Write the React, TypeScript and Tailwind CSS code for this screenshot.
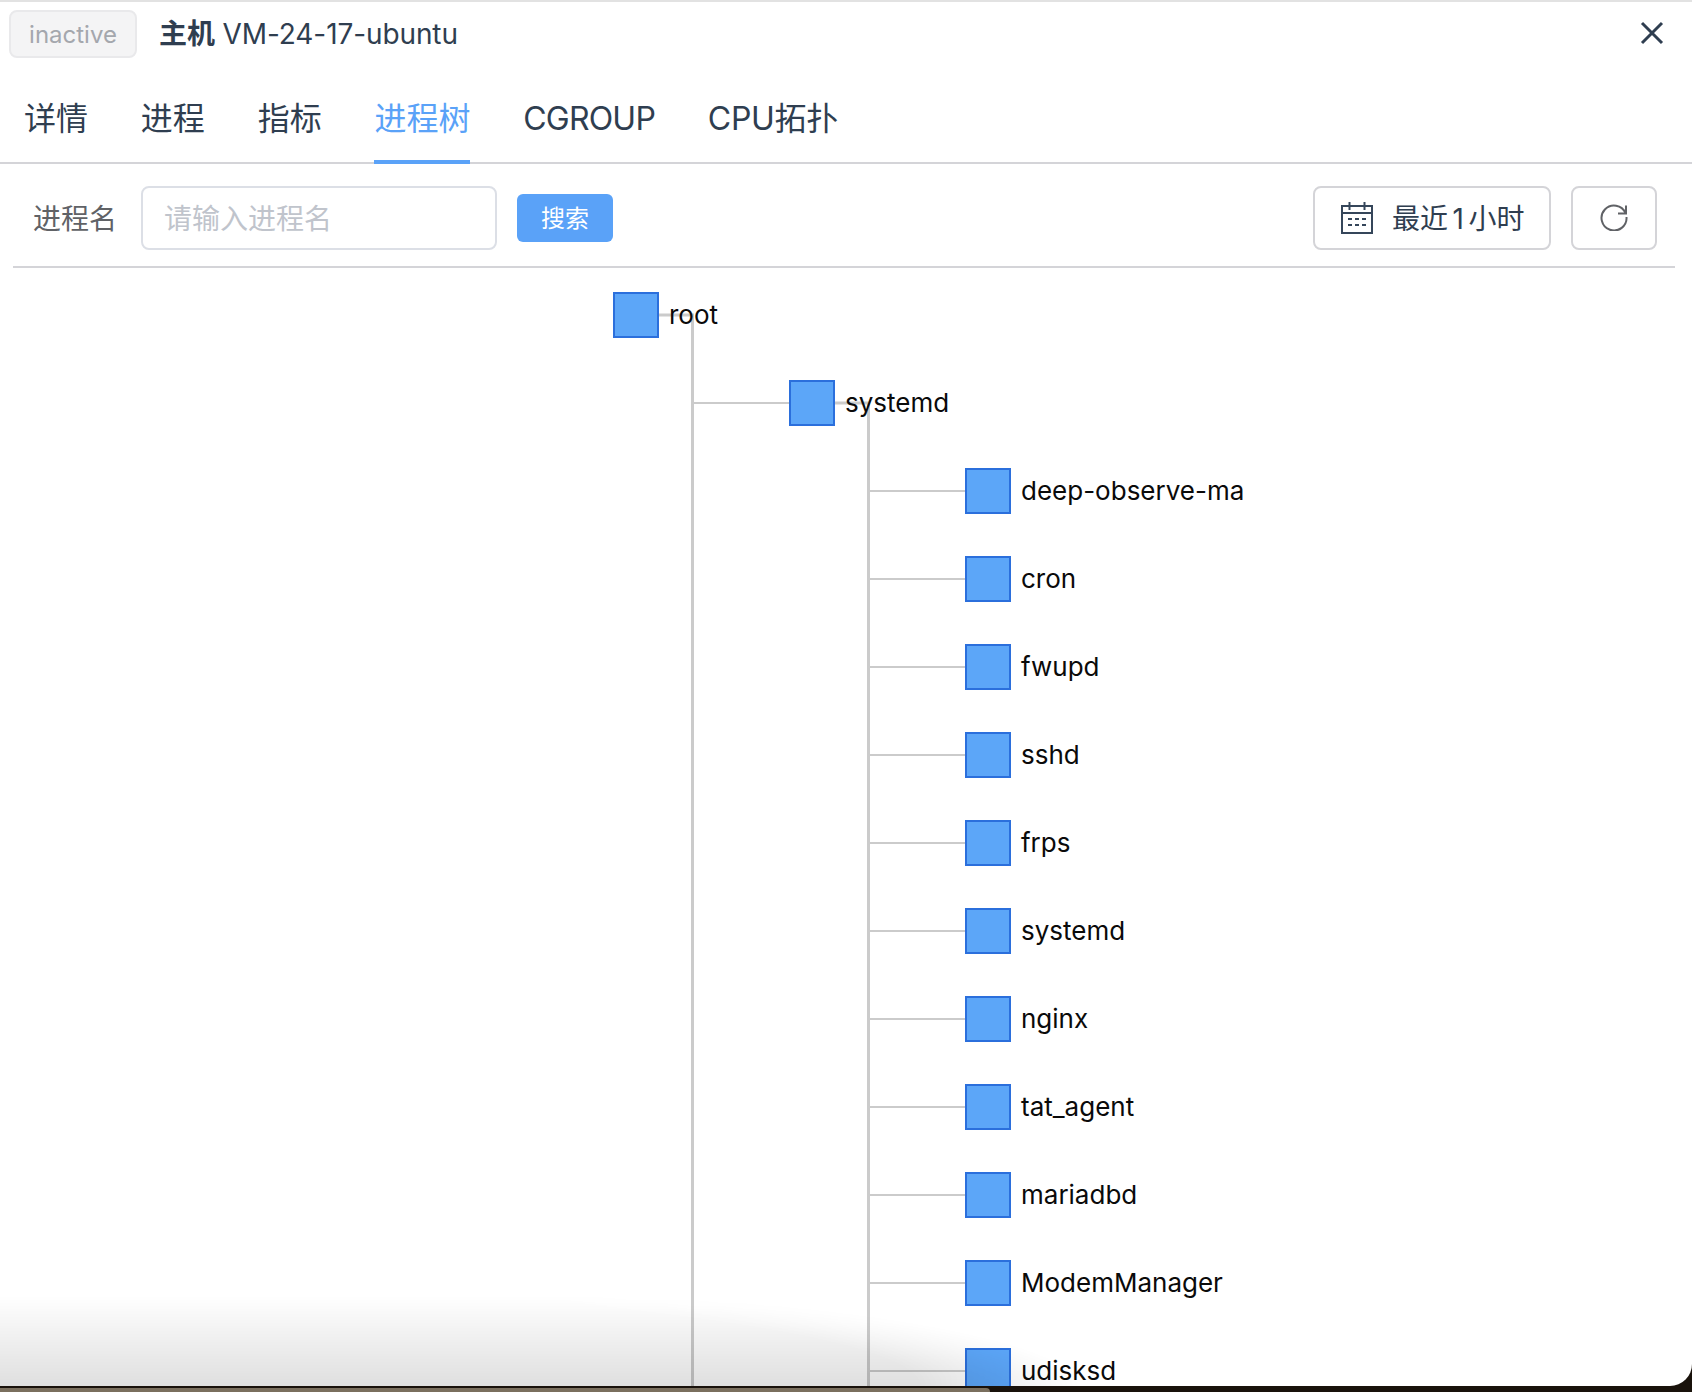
const FONT = "font-['Inter','Noto_Sans_CJK_SC',sans-serif]";

const children = ['deep-observe-ma','cron','fwupd','sshd','frps','systemd','nginx','tat_agent','mariadbd','ModemManager','udisksd'];

const tabs = [
  { label: '详情', cls: 'border-transparent text-[#2f3e50]' },
  { label: '进程', cls: 'border-transparent text-[#2f3e50]' },
  { label: '指标', cls: 'border-transparent text-[#2f3e50]' },
  { label: '进程树', cls: 'border-[#5aa2f8] text-[#5aa2f8]' },
  { label: 'CGROUP', cls: 'border-transparent text-[#2f3e50] tracking-[-0.8px]' },
  { label: 'CPU拓扑', cls: 'border-transparent text-[#2f3e50] tracking-[-0.3px]' },
];

function Node({ label, left }: { label: string; left: string }) {
  return (
    <div className={`flex h-[46px] shrink-0 items-center ${left}`}>
      <div className="h-[46px] w-[46px] shrink-0 border-2 border-[#2b6fdc] bg-[#5ca6f8]" />
      <span className="ml-[10px] mt-[0.5px] text-[26px] leading-[30px] text-[#0a0a0a]">{label}</span>
    </div>
  );
}

function TreeLines() {
  return (
    <svg className="absolute left-0 top-0" width="1692" height="1120" fill="none" stroke="#cbcbcb">
      <path d="M659 47H692.5V1120" strokeWidth="3" />
      <path d="M694 135H789" strokeWidth="2" />
      <path d="M835 135H868.5V1120" strokeWidth="3" />
      {children.map((c, i) => (
        <path key={c} d={`M870 ${223 + 88 * i}H965`} strokeWidth="2" />
      ))}
    </svg>
  );
}

function CalendarIcon() {
  return (
    <svg width="32" height="32" viewBox="0 0 32 32" fill="none" stroke="#35465a" strokeWidth="2" className="shrink-0">
      <rect x="1" y="4" width="30" height="27" />
      <path d="M1 11H31M8.5 0V8M23.5 0V8" />
      <path d="M7 17H11M14 17H18M21 17H25M7 23H11M14 23H18M21 23H25" />
    </svg>
  );
}

function RefreshIcon() {
  return (
    <svg width="28" height="28" viewBox="0 0 28 28" fill="none" stroke="#606266" strokeWidth="2" className="-mt-[2px] shrink-0">
      <path d="M25.5 10A12.5 12.5 0 1 0 26.5 14" />
      <path d="M26 2.5V10.5H18" />
    </svg>
  );
}

export default function App() {
  return (
    <div className={`${FONT} flex h-[1392px] w-[1692px] flex-col overflow-hidden bg-[#19120b]`}>
      <div className="relative flex h-[1386px] shrink-0 flex-col overflow-hidden rounded-br-[22px] border-t-2 border-[#e2e2e2] bg-white">
        <div className="flex h-[60px] shrink-0 items-start pl-[9px] pr-[28px] pt-[8px]">
          <div className="flex h-[48px] w-[128px] items-center justify-center rounded-[8px] border-2 border-[#e9e9eb] bg-[#f4f4f5] pt-[2px] text-[24px] text-[#a4a7ad]">inactive</div>
          <div className="ml-[22px] mt-[1px] text-[28px] leading-[46px] tracking-[-0.1px] text-[#2f3e50]">
            <span className="font-semibold">主机</span> VM-24-17-ubuntu
          </div>
          <svg className="ml-auto mt-[11px]" width="24" height="24" viewBox="0 0 24 24" fill="none" stroke="#2f3e50" strokeWidth="3">
            <path d="M2 2L22 22M22 2L2 22" />
          </svg>
        </div>
        <div className="flex h-[102px] shrink-0 border-b-2 border-[#d4d4d8] pl-[24px]">
          <div className="flex gap-[52.8px]">
            {tabs.map((t) => (
              <div key={t.label} className={`-mb-[2px] flex h-[102px] items-start border-b-4 pt-[28.5px] text-[32px] leading-[56px] ${t.cls}`}>{t.label}</div>
            ))}
          </div>
        </div>
        <div className="ml-[13px] mr-[17px] flex h-[104px] shrink-0 items-center border-b-2 border-[#d4d4d8] pl-[20px] pt-[6px]">
          <span className="mt-[2px] text-[28px] text-[#606266]">进程名</span>
          <div className="ml-[24px] flex h-[64px] w-[356px] items-center rounded-[8px] border-2 border-[#dcdfe6] pl-[21px] pt-[2px] text-[28px] text-[#c0c4cc]">请输入进程名</div>
          <div className="ml-[20px] flex h-[48px] w-[96px] items-center justify-center rounded-[6px] bg-[#5aa2f8] pt-[2px] text-[24px] text-white">搜索</div>
          <div className="ml-auto flex h-[64px] w-[238px] items-center rounded-[8px] border-2 border-[#d4d4d8] pl-[26px] text-[28px] text-[#2f3e50]">
            <CalendarIcon />
            <span className="ml-[19px] mt-[2px]">最近<span className="mx-[4.5px]">1</span>小时</span>
          </div>
          <div className="ml-[20px] mr-[18px] flex h-[64px] w-[86px] items-center justify-center rounded-[8px] border-2 border-[#d4d4d8]">
            <RefreshIcon />
          </div>
        </div>
        <div className="relative flex-1 overflow-hidden">
          <TreeLines />
          <div className="relative flex flex-col gap-[42px] pt-[24px]">
            <Node label="root" left="pl-[613px]" />
            <Node label="systemd" left="pl-[789px]" />
            {children.map((c) => (
              <Node key={c} label={c} left="pl-[965px]" />
            ))}
          </div>
        </div>
        <div className="pointer-events-none absolute bottom-0 left-0 h-[90px] w-[1100px] bg-linear-to-t from-[rgba(0,0,0,0.125)] to-transparent [mask-image:radial-gradient(ellipse_1080px_120px_at_0%_100%,black_85%,transparent_100%)]" />
      </div>
      <div className="flex-1 pt-[2px]">
        <div className="h-full w-[990px] rounded-tr-[6px] bg-[#7a6f5e]" />
      </div>
    </div>
  );
}
